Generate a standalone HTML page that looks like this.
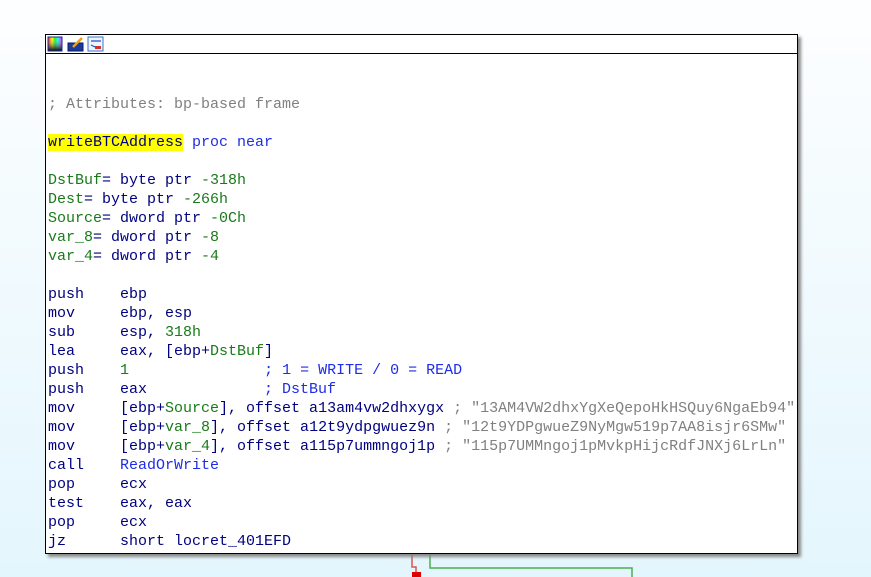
<!DOCTYPE html>
<html><head><style>
html,body{margin:0;padding:0;width:871px;height:577px;overflow:hidden;background:linear-gradient(#fdfeff,#e4f6fd);}
#box{position:absolute;left:45px;top:34px;width:751px;height:518px;border:1px solid #000;background:#fff;box-shadow:3px 3px 3px #888;}
#tb{position:absolute;left:0;top:0;width:751px;height:18px;border-bottom:1px solid #000;}
.l{position:absolute;left:2px;white-space:pre;font:15px/19px "Liberation Mono",monospace;color:#000080;height:19px;}
.g{color:#1a7a1a}.c{color:#808080}.b{color:#1f2ce8}.y{background:#ffff00}
</style></head><body>
<svg style="position:absolute;left:0;top:0" width="871" height="577">
<path d="M412 553 V567 H416 V572" stroke="#e05050" stroke-width="1.5" fill="none"/>
<rect x="412" y="572" width="9" height="5" fill="#e00000"/>
<path d="M430 553 V568 H632 V577" stroke="#4caf50" stroke-width="1.5" fill="none"/>
</svg>
<div id="box">
<div id="tb">
<svg width="70" height="18">
<defs><linearGradient id="h" x1="0" x2="1"><stop offset="0" stop-color="#f00"/><stop offset=".3" stop-color="#ff0"/><stop offset=".5" stop-color="#0f0"/><stop offset=".7" stop-color="#0ff"/><stop offset="1" stop-color="#f0f"/></linearGradient><linearGradient id="v" x1="0" y1="0" x2="0" y2="1"><stop offset="0" stop-color="#fff" stop-opacity="0"/><stop offset="1" stop-color="#000"/></linearGradient></defs>
<rect x="2" y="2" width="14" height="14" fill="url(#h)"/><rect x="2" y="2" width="14" height="14" fill="url(#v)" stroke="#1a2a9a"/>
<rect x="22" y="8" width="15" height="8" fill="#1a3aa0" stroke="#0a1a60"/><path d="M27 12 L36 3" stroke="#e8a020" stroke-width="2.5"/>
<rect x="42" y="2" width="15" height="14" fill="#eef4ff" stroke="#3a70d0"/><path d="M45 6 H55 M45 10 L49 12 M50 13 H55" stroke="#2050c0" stroke-width="1.2"/><rect x="49" y="11" width="6" height="3" fill="#d03030"/>
</svg>
</div>
<div class="l c" style="top:60px">; Attributes: bp-based frame</div>
<div class="l" style="top:98px"><span class="y">writeBTCAddress</span> <span class="b">proc near</span></div>
<div class="l" style="top:136px"><span class="g">DstBuf</span>= byte ptr <span class="g">-318h</span></div>
<div class="l" style="top:155px"><span class="g">Dest</span>= byte ptr <span class="g">-266h</span></div>
<div class="l" style="top:174px"><span class="g">Source</span>= dword ptr <span class="g">-0Ch</span></div>
<div class="l" style="top:193px"><span class="g">var_8</span>= dword ptr <span class="g">-8</span></div>
<div class="l" style="top:212px"><span class="g">var_4</span>= dword ptr <span class="g">-4</span></div>
<div class="l" style="top:250px">push    ebp</div>
<div class="l" style="top:269px">mov     ebp, esp</div>
<div class="l" style="top:288px">sub     esp, <span class="g">318h</span></div>
<div class="l" style="top:307px">lea     eax, [ebp+<span class="g">DstBuf</span>]</div>
<div class="l" style="top:326px">push    <span class="g">1</span>               <span class="b">; 1 = WRITE / 0 = READ</span></div>
<div class="l" style="top:345px">push    eax             <span class="b">; DstBuf</span></div>
<div class="l" style="top:364px">mov     [ebp+<span class="g">Source</span>], offset a13am4vw2dhxygx <span class="c">; "13AM4VW2dhxYgXeQepoHkHSQuy6NgaEb94"</span></div>
<div class="l" style="top:383px">mov     [ebp+<span class="g">var_8</span>], offset a12t9ydpgwuez9n <span class="c">; "12t9YDPgwueZ9NyMgw519p7AA8isjr6SMw"</span></div>
<div class="l" style="top:402px">mov     [ebp+<span class="g">var_4</span>], offset a115p7ummngoj1p <span class="c">; "115p7UMMngoj1pMvkpHijcRdfJNXj6LrLn"</span></div>
<div class="l" style="top:421px">call    <span class="b">ReadOrWrite</span></div>
<div class="l" style="top:440px">pop     ecx</div>
<div class="l" style="top:459px">test    eax, eax</div>
<div class="l" style="top:478px">pop     ecx</div>
<div class="l" style="top:497px">jz      short locret_401EFD</div>
</div>
</body></html>
